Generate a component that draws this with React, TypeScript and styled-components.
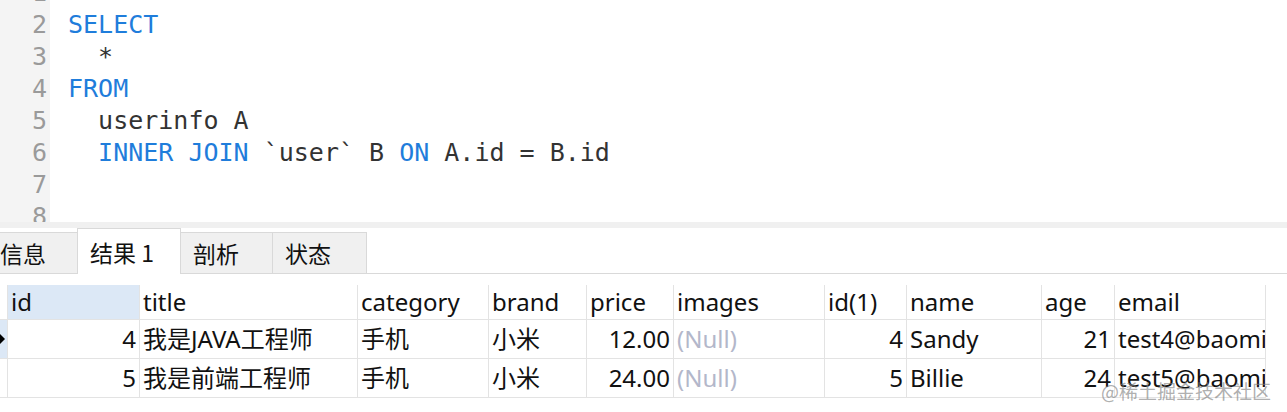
import styled, { createGlobalStyle } from "styled-components";

const GlobalStyle = createGlobalStyle`
  html, body {
    margin: 0;
    padding: 0;
    background: #fff;
    overflow: hidden;
  }
`;

const Page = styled.div`
  position: relative;
  width: 1287px;
  height: 412px;
  overflow: hidden;
  background: #fff;
`;

// ---- sql editor ----
const Editor = styled.div`
  height: 222px;
  overflow: hidden;
`;
const Lines = styled.div`
  margin-top: -23px;
`;
const Line = styled.div`
  display: flex;
  height: 32px;
  line-height: 32px;
  font-family: "DejaVu Sans Mono", "Liberation Mono", monospace;
  font-size: 25px;
`;
const LineNo = styled.span`
  box-sizing: border-box;
  width: 50px;
  padding-right: 3px;
  text-align: right;
  color: #9a9a9a;
  background: #f4f4f4;
`;
const Code = styled.span`
  padding-left: 18px;
  white-space: pre;
  color: #333;
`;
const Kw = styled.span`
  color: #1f7ddb;
`;

const Splitter = styled.div`
  height: 6px;
  background: #f0f0f0;
`;

// ---- tabs ----
const TabBar = styled.div`
  display: flex;
  align-items: flex-end;
  height: 45px;
  border-bottom: 1px solid #d9d9d9;
`;
const TabStrip = styled.div`
  display: flex;
  align-items: flex-end;
  margin-left: -12px;
  margin-bottom: -1px;
`;
const Tab = styled.div<{ $w: number; $active?: boolean }>`
  box-sizing: border-box;
  display: flex;
  align-items: center;
  width: ${(p) => p.$w}px;
  height: ${(p) => (p.$active ? 46 : 42)}px;
  padding-left: 12px;
  border: 1px solid #d9d9d9;
  border-bottom: ${(p) => (p.$active ? "none" : "1px solid #d9d9d9")};
  margin-left: -1px;
  background: ${(p) => (p.$active ? "#fff" : "#f0f0f0")};
  font-family: "Noto Sans CJK SC", "Noto Sans", sans-serif;
  font-size: 23px;
  color: #111;
`;

// ---- result grid ----
const cols = [8, 132, 218, 131, 98, 87, 151, 82, 135, 73, 151];

const Grid = styled.div`
  display: grid;
  grid-template-columns: ${cols.map((c) => c + "px").join(" ")};
  grid-auto-rows: 35px 39px 39px;
  margin-top: 11px;
  font-family: "Noto Sans", "Noto Sans CJK SC", sans-serif;
  font-size: 24px;
  color: #111;
`;
const Cell = styled.div<{ $right?: boolean; $hl?: boolean; $null?: boolean }>`
  box-sizing: border-box;
  display: flex;
  align-items: center;
  justify-content: ${(p) => (p.$right ? "flex-end" : "flex-start")};
  padding: 0 3px 0 3px;
  border-right: 1px solid #e3e3e3;
  border-bottom: 1px solid #e3e3e3;
  background: ${(p) => (p.$hl ? "#dce8f6" : "#fff")};
  color: ${(p) => (p.$null ? "#b3b7ca" : "#111")};
  white-space: nowrap;
  overflow: hidden;
  line-height: 1;
`;
const Selector = styled.div<{ $current?: boolean }>`
  box-sizing: border-box;
  display: flex;
  align-items: center;
  border-right: 1px solid #e3e3e3;
  border-bottom: 1px solid #e3e3e3;
  background: ${(p) => (p.$current ? "#dce8f6" : "#fff")};
`;
const Arrow = styled.span`
  width: 0;
  height: 0;
  border-top: 5px solid transparent;
  border-bottom: 5px solid transparent;
  border-left: 5px solid #000;
`;

const Watermark = styled.div`
  position: absolute;
  right: 16px;
  bottom: 8px;
  font-family: "Noto Sans CJK SC", sans-serif;
  font-size: 19px;
  color: rgba(130, 130, 130, 0.65);
`;

const headers = ["id", "title", "category", "brand", "price", "images", "id(1)", "name", "age", "email"];

const rows = [
  { id: 4, title: "我是JAVA工程师", category: "手机", brand: "小米", price: "12.00", id1: 4, name: "Sandy", age: 21, email: "test4@baomidou.com" },
  { id: 5, title: "我是前端工程师", category: "手机", brand: "小米", price: "24.00", id1: 5, name: "Billie", age: 24, email: "test5@baomidou.com" },
];

export default function App() {
  return (
    <Page>
      <GlobalStyle />
      <Editor>
        <Lines>
          <Line><LineNo>1</LineNo><Code></Code></Line>
          <Line><LineNo>2</LineNo><Code><Kw>SELECT</Kw></Code></Line>
          <Line><LineNo>3</LineNo><Code>  *</Code></Line>
          <Line><LineNo>4</LineNo><Code><Kw>FROM</Kw></Code></Line>
          <Line><LineNo>5</LineNo><Code>  userinfo A</Code></Line>
          <Line>
            <LineNo>6</LineNo>
            <Code>  <Kw>INNER JOIN</Kw> `user` B <Kw>ON</Kw> A.id = B.id</Code>
          </Line>
          <Line><LineNo>7</LineNo><Code></Code></Line>
          <Line><LineNo>8</LineNo><Code></Code></Line>
        </Lines>
      </Editor>
      <Splitter />
      <TabBar>
        <TabStrip>
          <Tab $w={91}>信息</Tab>
          <Tab $w={104} $active>结果 1</Tab>
          <Tab $w={93}>剖析</Tab>
          <Tab $w={95}>状态</Tab>
        </TabStrip>
      </TabBar>
      <Grid>
        <Selector />
        {headers.map((h, i) => (
          <Cell key={h} $hl={i === 0}>{h}</Cell>
        ))}
        {rows.map((r, i) => [
          <Selector key={"s" + i} $current={i === 0}>{i === 0 && <Arrow />}</Selector>,
          <Cell key={"a" + i} $right>{r.id}</Cell>,
          <Cell key={"b" + i}>{r.title}</Cell>,
          <Cell key={"c" + i}>{r.category}</Cell>,
          <Cell key={"d" + i}>{r.brand}</Cell>,
          <Cell key={"e" + i} $right>{r.price}</Cell>,
          <Cell key={"f" + i} $null>(Null)</Cell>,
          <Cell key={"g" + i} $right>{r.id1}</Cell>,
          <Cell key={"h" + i}>{r.name}</Cell>,
          <Cell key={"j" + i} $right>{r.age}</Cell>,
          <Cell key={"k" + i}>{r.email}</Cell>,
        ])}
      </Grid>
      <Watermark>@稀土掘金技术社区</Watermark>
    </Page>
  );
}
